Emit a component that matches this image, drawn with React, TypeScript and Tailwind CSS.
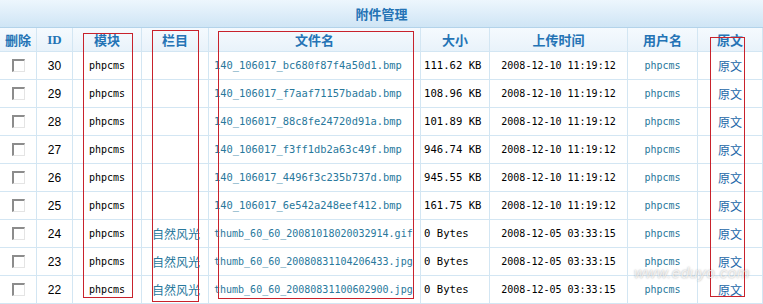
const rows = [
  { id: 30, cat: "", file: "140_106017_bc680f87f4a50d1.bmp", size: "111.62 KB", time: "2008-12-10 11:19:12" },
  { id: 29, cat: "", file: "140_106017_f7aaf71157badab.bmp", size: "108.96 KB", time: "2008-12-10 11:19:12" },
  { id: 28, cat: "", file: "140_106017_88c8fe24720d91a.bmp", size: "101.89 KB", time: "2008-12-10 11:19:12" },
  { id: 27, cat: "", file: "140_106017_f3ff1db2a63c49f.bmp", size: "946.74 KB", time: "2008-12-10 11:19:12" },
  { id: 26, cat: "", file: "140_106017_4496f3c235b737d.bmp", size: "945.55 KB", time: "2008-12-10 11:19:12" },
  { id: 25, cat: "", file: "140_106017_6e542a248eef412.bmp", size: "161.75 KB", time: "2008-12-10 11:19:12" },
  { id: 24, cat: "自然风光", file: "thumb_60_60_20081018020032914.gif", size: "0 Bytes", time: "2008-12-05 03:33:15" },
  { id: 23, cat: "自然风光", file: "thumb_60_60_20080831104206433.jpg", size: "0 Bytes", time: "2008-12-05 03:33:15" },
  { id: 22, cat: "自然风光", file: "thumb_60_60_20080831100602900.jpg", size: "0 Bytes", time: "2008-12-05 03:33:15" },
];

const cols = "grid grid-cols-[37px_36px_69px_67px_212px_69px_138px_70px_65px]";
const mono = "font-['DejaVu_Sans_Mono','Liberation_Mono','Noto_Sans_CJK_SC',monospace]";
const cjk = "font-['Noto_Sans_CJK_SC','Liberation_Sans',sans-serif]";
const cell = "flex items-center border-r border-b border-[#d3e6f3] overflow-hidden whitespace-nowrap";

function Checkbox() {
  return (
    <span className="block h-[13px] w-[13px] border-t-2 border-l-2 border-r border-b border-t-[#8c8c8c] border-l-[#8c8c8c] border-r-[#e4e4e4] border-b-[#e4e4e4] bg-white" />
  );
}

export default function App() {
  const heads = ["删除", "ID", "模块", "栏目", "文件名", "大小", "上传时间", "用户名", "原文"];

  return (
    <div className="relative h-[304px] w-[763px] overflow-hidden bg-white">
      <div className="flex h-[28px] items-center justify-center border-b border-[#b3d3ea] bg-gradient-to-b from-[#edf6fd] to-[#cfe5f5]">
        <span className={`${cjk} text-[13px] font-bold text-[#2473b5]`}>附件管理</span>
      </div>

      <div className={`${cols} h-[24px] bg-gradient-to-b from-[#f5fafe] to-[#e8f2fa]`}>
        {heads.map((h, i) => (
          <div
            key={h}
            className={`${cell} justify-center text-[13px] font-bold text-[#2473b5] ${
              i === 1 ? "font-['Liberation_Serif',serif]" : cjk
            }`}
          >
            {h}
          </div>
        ))}
      </div>

      {rows.map((r) => (
        <div key={r.id} className={`${cols} h-[28px]`}>
          <div className={`${cell} justify-center`}>
            <Checkbox />
          </div>
          <div className={`${cell} justify-center font-['Liberation_Sans',sans-serif] text-[12px] text-black`}>
            {r.id}
          </div>
          <div className={`${cell} justify-center ${mono} text-[10px] text-black`}>phpcms</div>
          <div className={`${cell} pl-[10px] ${cjk} text-[12px] text-[#28789c]`}>{r.cat}</div>
          <div
            className={`${cell} pl-[5px] ${mono} ${
              r.file.length > 30 ? "text-[10px]" : "text-[10.4px]"
            } text-[#28789c]`}
          >
            {r.file}
          </div>
          <div className={`${cell} pl-[3px] ${mono} text-[10.6px] text-black`}>{r.size}</div>
          <div className={`${cell} justify-center ${mono} text-[10px] text-black`}>{r.time}</div>
          <div className={`${cell} justify-center ${mono} text-[10px] text-[#28789c]`}>phpcms</div>
          <div className={`${cell} justify-center ${cjk} text-[12px] text-[#2266a8]`}>原文</div>
        </div>
      ))}

      {/* annotation boxes drawn over the table */}
      <div className="pointer-events-none absolute left-[83px] top-[33px] h-[265px] w-[50px] border border-[#c8222c]" />
      <div className="pointer-events-none absolute left-[152px] top-[30px] h-[272px] w-[47px] border border-[#c8222c]" />
      <div className="pointer-events-none absolute left-[218px] top-[31px] h-[268px] w-[196px] border border-[#c8222c]" />
      <div className="pointer-events-none absolute left-[710px] top-[37px] h-[260px] w-[35px] border border-[#c8222c]" />

      <div className="pointer-events-none absolute left-[634px] top-[262px] font-['Liberation_Sans',sans-serif] text-[15px] italic tracking-[0.5px] text-white/70 [text-shadow:0_0_2px_rgba(0,0,0,0.35)]">
        www.eduyo.com
      </div>
    </div>
  );
}
